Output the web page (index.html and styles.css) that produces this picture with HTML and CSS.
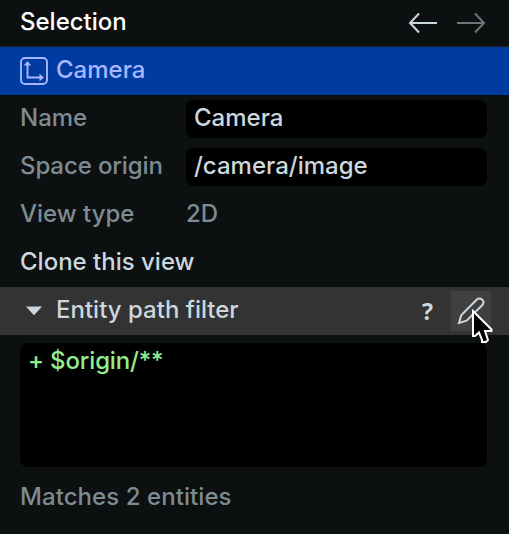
FILE: index.html
```html
<!DOCTYPE html>
<html lang="en">
<head>
    <meta charset="UTF-8">
    <meta name="viewport" content="width=device-width, initial-scale=1.0">
    <title>Selection</title>
    <link rel="stylesheet" href="styles.css">
</head>
<body>

<div class="panel">
    <div class="panel-header">
        <span class="title">Selection</span>
        <div class="history">
            <svg width="30" height="22" viewBox="0 0 30 22"><path d="M29 11H3M11 1.5L2 11L11 20.5"/></svg>
            <svg class="disabled" width="30" height="22" viewBox="0 0 30 22"><path d="M1 11H27M19 1.5L28 11L19 20.5"/></svg>
        </div>
    </div>

    <div class="selected-item">
        <svg width="28" height="28" viewBox="0 0 28 28">
            <rect x="1" y="1" width="26" height="26" rx="4"/>
            <path d="M7.5 7V20.5H21"/>
            <path class="tip" d="M7.5 4L11.3 8.5H3.7ZM24 20.5L19.5 24.3V16.7Z"/>
        </svg>
        <span>Camera</span>
    </div>

    <!-- Properties -->
    <div class="row">
        <span class="label">Name</span>
        <div class="input">Camera</div>
    </div>
    <div class="row">
        <span class="label tight">Space origin</span>
        <div class="input">/camera/image</div>
    </div>
    <div class="row">
        <span class="label">View type</span>
        <span class="value">2D</span>
    </div>
    <div class="row">
        <span class="clone">Clone this view</span>
    </div>

    <!-- Entity path filter -->
    <div class="section-header">
        <svg class="triangle" width="18" height="10" viewBox="0 0 18 10"><path d="M1 0.5H17L9.8 8.6Q9 9.4 8.2 8.6Z"/></svg>
        <span class="section-title">Entity path filter</span>
        <span class="help">?</span>
        <div class="edit">
            <svg class="pencil" width="28" height="28" viewBox="0 0 28 28"><path d="M2 26L4.2 18.2L19.8 2.6Q22.3 0.4 25.2 2.6Q27.8 5.2 25.4 8L9.6 23.6Z"/></svg>
            <svg class="cursor" width="24" height="36" viewBox="0 0 24 36"><path d="M2 2V27H4L8 23.5L11 31V33H15L17 31L14 22H20.5V20.5Z"/></svg>
        </div>
    </div>

    <div class="filter">+ $origin/**</div>
    <div class="matches">Matches 2 entities</div>
</div>

</body>
</html>
```

FILE: styles.css
```css
body {
    margin: 0;
    background-color: #0d1011;
    font-family: Inter, sans-serif;
    font-size: 24px;
    font-weight: 500;
    line-height: 44px;
    color: #cad8de;
    overflow: hidden;
}

.panel {
    height: 534px;
}

.panel-header {
    display: flex;
    justify-content: space-between;
    height: 46px;
    padding: 0 23px 0 20px;
    border-bottom: 1px solid #1c2123;
}

.title {
    color: #fff;
}

.history {
    display: flex;
    align-items: center;
    gap: 18px;
}

.history svg {
    fill: none;
    stroke: #cad8de;
    stroke-width: 2;
}

.history .disabled {
    stroke: #6c7679;
}

.selected-item {
    display: flex;
    gap: 8px;
    height: 48px;
    padding: 0 20px;
    background-color: #003ba1;
    color: #a6b7ff;
    line-height: 46px;
}

.selected-item svg {
    margin-top: 10px;
    fill: none;
    stroke: #a6b7ff;
    stroke-width: 1.9;
}

.selected-item .tip {
    fill: #a6b7ff;
    stroke: none;
}

.row {
    display: flex;
    height: 48px;
    padding: 0 22px 0 20px;
    line-height: 46px;
}

.label {
    width: 166px;
    color: #7d8c92;
}

.tight {
    letter-spacing: -0.1px;
}

.input {
    flex: 1;
    height: 38px;
    margin-top: 5px;
    padding-left: 8px;
    border-radius: 8px;
    background-color: #000;
    line-height: 36px;
}

.value {
    color: #7d8c92;
}

.section-header {
    display: flex;
    height: 48px;
    padding: 0 18px 0 25px;
    background-color: #333;
    line-height: 46px;
}

.triangle {
    margin-top: 19px;
    fill: #cad8de;
}

.section-title {
    flex: 1;
    margin-left: 13px;
}

.help {
    margin-right: 18px;
    font-family: "Noto Sans", sans-serif;
    font-size: 23px;
    font-weight: 700;
    line-height: 48px;
}

.edit {
    position: relative;
    width: 40px;
    height: 40px;
    margin-top: 4px;
    background-color: #404040;
}

.pencil {
    display: block;
    margin: 6px;
    fill: none;
    stroke: #cad8de;
    stroke-width: 2;
}

/* mouse pointer over the edit button */
.cursor {
    position: absolute;
    top: 18px;
    left: 20px;
    fill: #000;
    stroke: #fff;
    stroke-width: 2;
}

.filter {
    height: 124px;
    margin: 8px 22px 0 20px;
    padding-left: 8px;
    box-sizing: border-box;
    border-radius: 8px;
    background-color: #000;
    color: #90ee90;
    line-height: 36px;
    letter-spacing: -0.15px;
}

.matches {
    margin-top: 8px;
    padding-left: 20px;
    color: #7d8c92;
    letter-spacing: 0.07px;
}
```
